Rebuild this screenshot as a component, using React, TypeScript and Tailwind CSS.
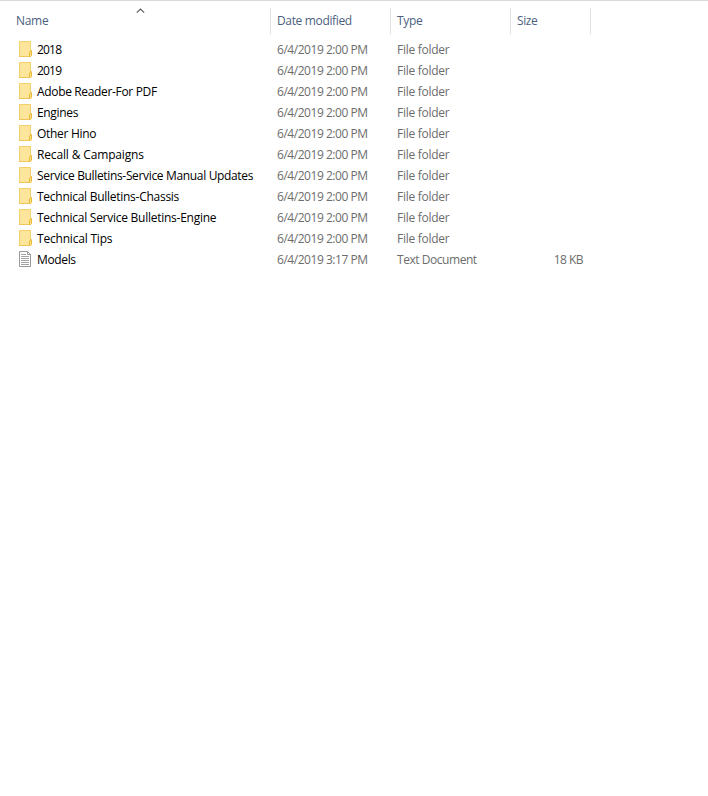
type Entry = {
  name: string;
  modified: string;
  kind: "folder" | "text";
  size?: string;
  spacing: string;
};

const entries: Entry[] = [
  { name: "2018", modified: "6/4/2019 2:00 PM", kind: "folder", spacing: "tracking-[-0.8px]" },
  { name: "2019", modified: "6/4/2019 2:00 PM", kind: "folder", spacing: "tracking-[-0.8px]" },
  { name: "Adobe Reader-For PDF", modified: "6/4/2019 2:00 PM", kind: "folder", spacing: "tracking-[-0.34px]" },
  { name: "Engines", modified: "6/4/2019 2:00 PM", kind: "folder", spacing: "tracking-[-0.34px]" },
  { name: "Other Hino", modified: "6/4/2019 2:00 PM", kind: "folder", spacing: "tracking-[-0.3px]" },
  { name: "Recall & Campaigns", modified: "6/4/2019 2:00 PM", kind: "folder", spacing: "tracking-[-0.15px]" },
  { name: "Service Bulletins-Service Manual Updates", modified: "6/4/2019 2:00 PM", kind: "folder", spacing: "tracking-[-0.34px]" },
  { name: "Technical Bulletins-Chassis", modified: "6/4/2019 2:00 PM", kind: "folder", spacing: "tracking-[-0.27px]" },
  { name: "Technical Service Bulletins-Engine", modified: "6/4/2019 2:00 PM", kind: "folder", spacing: "tracking-[-0.26px]" },
  { name: "Technical Tips", modified: "6/4/2019 2:00 PM", kind: "folder", spacing: "tracking-[-0.2px]" },
  { name: "Models", modified: "6/4/2019 3:17 PM", kind: "text", size: "18 KB", spacing: "tracking-[-0.35px]" },
];

function FolderIcon() {
  return (
    <svg width="16" height="16" viewBox="0 0 16 16" className="-mt-px shrink-0">
      <path d="M2 0h12v16H2z" fill="#fde69b" />
      <path d="M2.5 16V.5H13.5V10" fill="none" stroke="#f3d06d" />
      <path d="M2 15.5h11" stroke="#eec65a" />
      <path d="M12.5 15.5V11l2-1.5v5l-1 1z" fill="#fde28a" stroke="#e9b93a" />
    </svg>
  );
}

function TextIcon() {
  return (
    <svg width="16" height="16" viewBox="0 0 16 16" className="-mt-px shrink-0">
      <path d="M2.5.5h8l3 3v12h-11z" fill="#fff" stroke="#9a9a9a" />
      <path d="M10.5.5v3h3" fill="none" stroke="#9a9a9a" />
      <path d="M4 3.5h5M4 5.5h8M4 7.5h8M4 9.5h8M4 11.5h8M4 13.5h8" stroke="#a3a3a3" />
    </svg>
  );
}

function Header() {
  return (
    <div className="flex h-[26px] text-[#4c5f80]">
      <div className="relative w-[271px] border-r border-[#e2e2e2] pl-4 leading-[26px]">
        <span className="tracking-[-0.3px]">Name</span>
        <svg width="10" height="6" viewBox="0 0 10 6" className="absolute top-0 left-[136px]">
          <path d="M.8 4.7 4.5 1l3.7 3.7" fill="none" stroke="#5a5a5a" strokeWidth="1.1" />
        </svg>
      </div>
      <div className="w-[120px] border-r border-[#e2e2e2] pl-1.5 leading-[26px]">
        <span className="tracking-[-0.35px]">Date modified</span>
      </div>
      <div className="w-[120px] border-r border-[#e2e2e2] pl-1.5 leading-[26px] tracking-[-0.3px]">Type</div>
      <div className="w-20 border-r border-[#e2e2e2] pl-1.5 leading-[26px] tracking-[-0.4px]">Size</div>
    </div>
  );
}

function Row({ entry }: { entry: Entry }) {
  return (
    <div className="flex h-[21px] items-center whitespace-nowrap text-[#6d6d6d]">
      <div className="flex w-[277px] items-center gap-1 pl-[17px] text-black">
        {entry.kind === "folder" ? <FolderIcon /> : <TextIcon />}
        <span className={entry.spacing}>{entry.name}</span>
      </div>
      <div className="w-[120px] tracking-[-0.46px]">{entry.modified}</div>
      {entry.kind === "folder" ? (
        <div className="w-[120px] tracking-[-0.27px]">File folder</div>
      ) : (
        <div className="w-[120px] tracking-[-0.45px]">Text Document</div>
      )}
      <div className="w-[66px] text-right tracking-[-0.55px]">{entry.size}</div>
    </div>
  );
}

export default function App() {
  return (
    <div className="h-[796px] w-[708px] overflow-hidden border-t border-[#d9d9d9] bg-white pt-[7px] font-['Open_Sans','Noto_Sans',sans-serif] text-[12px]">
      <Header />
      <div className="pt-[5px]">
        {entries.map((entry) => (
          <Row key={entry.name} entry={entry} />
        ))}
      </div>
    </div>
  );
}
